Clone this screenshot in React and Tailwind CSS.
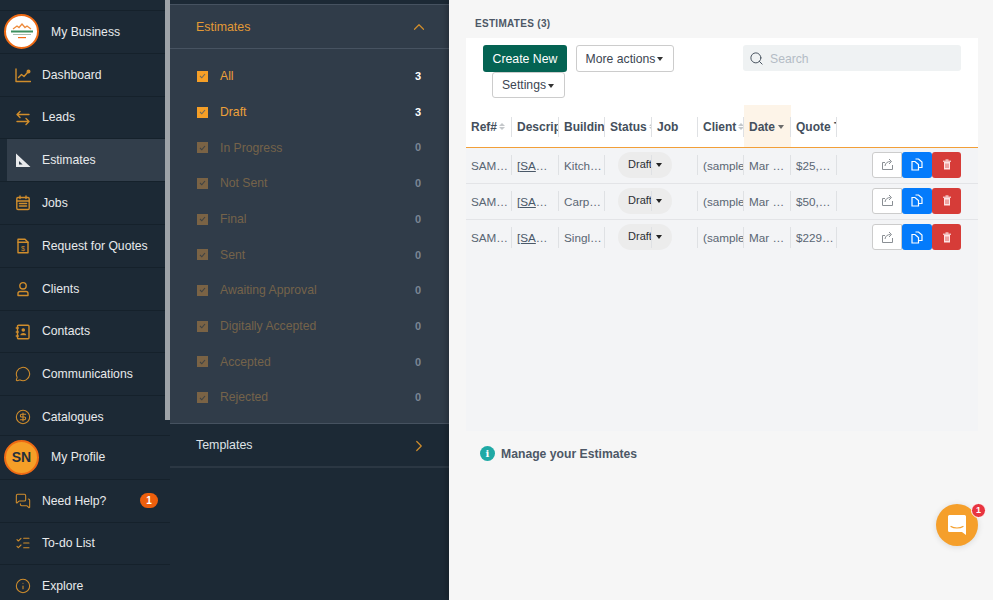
import React from "react";
import { ChevronUp, ChevronRight, Search, CircleDollarSign, MessageCircle, MessagesSquare, ListChecks, Info } from "lucide-react";

const OR = "#d08d2c";
const I = ({ children }) => (
  <svg width="16" height="16" viewBox="0 0 16 16" fill="none" stroke={OR} strokeWidth="1.4" strokeLinecap="round" strokeLinejoin="round">{children}</svg>
);
const DashIcon = () => (<I><path d="M1 2v12.5h14.5" /><path d="M3.5 10.5l3-3 2.5 2 4-4.5" /><circle cx="13.5" cy="4.5" r="1.3" fill={OR} /></I>);
const LeadsIcon = () => (<I><path d="M14 4.5H2.5M5 1.5l-3 3 3 3" /><path d="M2 11.5h11.5M11 8.5l3 3-3 3" /></I>);
const RulerIcon = () => (
  <svg width="16" height="16" viewBox="0 0 16 16"><path fillRule="evenodd" d="M1 1.5L15.5 15H1zM4 9V12.5h3.6z" fill="#e8eaec" /></svg>
);
const JobsIcon = () => (<I><rect x="1.8" y="2.5" width="12.4" height="12" rx="1.2" /><path d="M1.8 6h12.4M5 1v2.5M11 1v2.5" /><path d="M4.5 8.5h7M4.5 11h7" strokeWidth="1.6" /></I>);
const QuoteIcon = () => (<I><path d="M3 1.2h7l3 3v10.6H3z" /><path d="M3 4.2h10" /><text x="8" y="12.5" fontSize="7" fill={OR} stroke="none" textAnchor="middle" fontFamily="Liberation Sans">$</text></I>);
const ClientIcon = () => (<I><circle cx="8" cy="4.8" r="3.2" /><path d="M3 14.5v-2a2 2 0 0 1 2-2h6a2 2 0 0 1 2 2v2z" /></I>);
const ContactIcon = () => (<I><rect x="2.5" y="1.2" width="11.5" height="13.6" rx="1" /><circle cx="8.3" cy="6" r="1.8" fill={OR} stroke="none" /><path d="M5.3 11.2c.4-3 5.6-3 6 0z" fill={OR} stroke="none" /><path d="M1.3 4h2M1.3 8h2M1.3 12h2" /></I>);
const li = { size: 16, color: OR, strokeWidth: 1.6 };

const Row = ({ icon, label, active, badge }) => (
  <div className={`h-[42.8px] shrink-0 border-b border-[#15212b] flex items-center ${active ? "pl-[7px]" : ""}`}>
    <div className={`flex items-center h-full w-full ${active ? "bg-[#323e4b] pl-[8px]" : "pl-[15px]"}`}>
      <span className="w-[27px] flex shrink-0">{icon}</span>
      <span className="text-[12.2px] text-[#e8eaec]">{label}</span>
      {badge && <span className="ml-auto mr-[12px] w-[18px] h-[15px] rounded-full bg-[#ee5f0c] text-white text-[10px] font-bold flex items-center justify-center">{badge}</span>}
    </div>
  </div>
);

const Logo = () => (
  <div className="w-[35px] h-[35px] rounded-full border-[2.5px] border-[#ee6a14] bg-white flex items-center justify-center shrink-0">
    <svg width="26" height="20" viewBox="0 0 26 20" fill="none">
      <path d="M4 7l4-3 2 1.5 3-3.5 3 3.5 2-1.5 4 3" stroke="#ee8a3a" strokeWidth="1.3" />
      <rect x="2" y="8.5" width="22" height="2" fill="#3d8f5f" />
      <rect x="4" y="12" width="18" height="1" fill="#a9bcae" />
      <rect x="9" y="15" width="8" height="1.2" fill="#ee6a14" />
    </svg>
  </div>
);

const statuses = [
  ["All", 3, true], ["Draft", 3, true], ["In Progress", 0], ["Not Sent", 0], ["Final", 0], ["Sent", 0],
  ["Awaiting Approval", 0], ["Digitally Accepted", 0], ["Accepted", 0], ["Rejected", 0],
];

const Check = ({ on }) => (
  <span className={`ml-[1px] w-[11px] h-[11px] flex items-center justify-center shrink-0 ${on ? "bg-[#f59f27]" : "bg-[#7a6345]"}`}>
    <svg width="7" height="6" viewBox="0 0 7 6" fill="none"><path d="M1 3l1.8 1.8L6 1" stroke={on ? "#6f6a5c" : "#3f4344"} strokeWidth="1.1" /></svg>
  </span>
);

const cols = [
  ["Ref#", true], ["Descrip"], ["Buildin"], ["Status", true], ["Job"], ["Client", true], ["Date"], ["Quote T"],
];
const gridCls = "grid grid-cols-[46px_47px_46px_47px_46px_46px_47px_46px_1fr]";
const rows = [
  ["SAM…", "Kitch…", "$25,…"],
  ["SAM…", "Carp…", "$50,…"],
  ["SAM…", "Singl…", "$229…"],
];
const Cell = ({ children }) => (
  <div className="flex items-center h-full min-w-0 py-[7px]">
    <div className="border-r border-[#dfe1e4] h-full w-full flex items-center pl-[5px] pr-[1px] min-w-0 overflow-hidden">
      <span className="block whitespace-nowrap text-[11.7px] text-[#5a6673] pt-[2px]">{children}</span>
    </div>
  </div>
);

export default function App() {
  return (
    <div className="h-[600px] w-[993px] flex overflow-hidden font-['Liberation_Sans',sans-serif]">
      {/* Sidebar */}
      <div className="relative w-[170px] shrink-0 bg-[#1c2935] flex flex-col overflow-hidden">
        <div className="h-[10.5px] shrink-0 border-b border-[#15212b]" />
        <div className="h-[43.4px] shrink-0 border-b border-[#15212b] flex items-center pl-[4px]">
          <Logo />
          <span className="ml-[12px] text-[12.2px] text-[#e8eaec]">My Business</span>
        </div>
        <Row icon={<DashIcon />} label="Dashboard" />
        <Row icon={<LeadsIcon />} label="Leads" />
        <Row icon={<RulerIcon />} label="Estimates" active />
        <Row icon={<JobsIcon />} label="Jobs" />
        <Row icon={<QuoteIcon />} label="Request for Quotes" />
        <Row icon={<ClientIcon />} label="Clients" />
        <Row icon={<ContactIcon />} label="Contacts" />
        <Row icon={<MessageCircle {...li} />} label="Communications" />
        <div className="h-[39.5px] shrink-0 border-b border-[#15212b] overflow-hidden">
          <div className="flex items-center h-[42px] pl-[15px]">
            <span className="w-[27px] flex"><CircleDollarSign {...li} /></span>
            <span className="text-[12.2px] text-[#e8eaec]">Catalogues</span>
          </div>
        </div>
        <div className="h-[44px] shrink-0 border-b border-[#15212b] flex items-center pl-[4px]">
          <div className="w-[35px] h-[35px] rounded-full border-[2px] border-[#ee6a14] bg-[#f59f27] flex items-center justify-center text-[14px] font-bold text-[#24303c] shrink-0">SN</div>
          <span className="ml-[12px] text-[12.2px] text-[#e8eaec]">My Profile</span>
        </div>
        <Row icon={<MessagesSquare {...li} />} label="Need Help?" badge="1" />
        <Row icon={<ListChecks {...li} />} label="To-do List" />
        <Row icon={<Info {...li} />} label="Explore" />
        <div className="absolute right-0 top-0 w-[5px] h-[420px] bg-[#9ea3a8]" />
      </div>

      {/* Second panel */}
      <div className="w-[279px] shrink-0 bg-[#1c2935] flex flex-col pt-[4px]">
        <div className="bg-[#303c49] border-t border-[#465260] flex flex-col h-[419px]">
          <div className="h-[44px] shrink-0 border-b border-[#475361] flex items-center justify-between pl-[26px] pr-[21px] pt-[1px]">
            <span className="text-[12.4px] text-[#e39a35]">Estimates</span>
            <ChevronUp size={18} color={OR} strokeWidth={1.6} />
          </div>
          <div className="flex flex-col pt-[9.5px]">
            {statuses.map(([n, c, on]) => (
              <div key={n} className="h-[35.7px] flex items-center pl-[26px] pr-[28px]">
                <Check on={on} />
                <span className={`ml-[12px] text-[12.2px] ${on ? "text-[#eda03a]" : "text-[#75634a]"}`}>{n}</span>
                <span className={`ml-auto text-[11px] font-bold ${on ? "text-white" : "text-[#7a8694]"}`}>{c}</span>
              </div>
            ))}
          </div>
        </div>
        <div className="h-[45px] shrink-0 border-t border-[#465260] border-b-2 border-b-[#2b3743] flex items-center justify-between pl-[26px] pr-[21px] pt-[1px]">
          <span className="text-[12.4px] text-[#dfe3e7]">Templates</span>
          <ChevronRight size={18} color={OR} strokeWidth={1.6} />
        </div>
      </div>

      {/* Main */}
      <div className="relative flex-1 bg-[#f6f6f6] shadow-[-2px_0_6px_rgba(0,0,0,0.25)] pl-[17px] pr-[15px] min-w-0">
        <div className="h-[38px] flex items-center pl-[9px] pt-[9px] text-[10px] font-bold text-[#4d5866] tracking-[0.3px]">ESTIMATES (3)</div>
        <div className="bg-[#f3f4f6] h-[393px]">
          <div className="bg-white h-[110px] border-b border-[#f29f38] flex flex-col">
            <div className="flex pl-[17px] pr-[17px] pt-[7px] h-[67px] shrink-0">
              <div className="w-[200px] flex flex-wrap content-start">
                <button className="h-[26.5px] w-[84px] rounded-[3px] bg-[#046353] text-white text-[12.3px] mr-[9px] pt-[1px]">Create New</button>
                <button className="h-[26.5px] w-[98px] rounded-[3px] border border-[#ccc] bg-white text-[#3c4652] text-[12.2px] pt-[1px] pr-[1px]">More actions<span className="inline-block align-middle ml-[2px] border-x-[3.5px] border-x-transparent border-t-[4px] border-t-[#333]" /></button>
                <div className="w-full flex pl-[9px]">
                  <button className="h-[26px] w-[73px] rounded-[3px] border border-[#ccc] bg-white text-[#3c4652] text-[12.2px] pt-[1px] pr-[1px]">Settings<span className="inline-block align-middle ml-[2px] border-x-[3.5px] border-x-transparent border-t-[4px] border-t-[#333]" /></button>
                </div>
              </div>
              <div className="ml-auto w-[218px] h-[26px] rounded-[3px] bg-[#eff2f3] flex items-center pl-[6px] gap-[6px]">
                <Search size={15} color="#4a5561" strokeWidth={1.6} />
                <span className="text-[12.2px] text-[#b4bcc5] pt-[2px]">Search</span>
              </div>
            </div>
            <div className={`${gridCls} h-[42px]`}>
              {cols.map(([c, sort]) => (
                <div key={c} className={`flex items-center h-full min-w-0 pt-[1.5px] ${c === "Date" ? "bg-[#fdf4e8]" : ""}`}>
                  <div className="h-[20px] w-full border-r border-[#dfe1e4] flex items-center pl-[5px] overflow-hidden">
                    <span className="text-[12px] font-bold text-[#444f5c] whitespace-nowrap">{c}</span>
                    {sort && <span className="ml-[2px] flex flex-col gap-[1px] shrink-0"><span className="border-x-[3px] border-x-transparent border-b-[3px] border-b-[#c4c7ca]" /><span className="border-x-[3px] border-x-transparent border-t-[3px] border-t-[#c4c7ca]" /></span>}
                    {c === "Date" && <span className="ml-[3px] border-x-[3.5px] border-x-transparent border-t-[4px] border-t-[#6b6b6b]" />}
                  </div>
                </div>
              ))}
            </div>
          </div>
          {rows.map((r, idx) => (
            <div key={r[1]} className={`${gridCls} h-[36px] pb-[1.5px] ${idx < 2 ? "border-b-[1.5px] border-[#e3e4e7]" : ""}`}>
              <Cell>{r[0]}</Cell>
              <Cell><span className="underline text-[#4a5868]">[SA</span>…</Cell>
              <Cell>{r[1]}</Cell>
              <div className="relative flex items-center h-full">
                <div className="absolute left-[13px] top-[4px] w-[54px] h-[26px] rounded-full bg-[#ececec] flex items-center justify-center gap-[4px] text-[11px] text-[#2b2f33]">
                  <span className="-mt-[1px]">Draft</span>
                  <span className="border-x-[3.5px] border-x-transparent border-t-[4px] border-t-[#222]" />
                </div>
                <span className="absolute right-0 top-[7px] bottom-[7px] w-px bg-[#dfe1e4]" />
              </div>
              <div className="flex items-center h-full min-w-0 py-[7px]"><div className="h-full w-full border-r border-[#dfe1e4]" /></div>
              <Cell>(sample</Cell>
              <Cell>Mar …</Cell>
              <Cell>{r[2]}</Cell>
              <div className="flex items-center pl-[35px]">
                <span className="w-[30px] h-[26px] rounded-l-[3px] border border-[#ccc] bg-white flex items-center justify-center">
                  <svg width="13" height="13" viewBox="0 0 13 13" fill="none" stroke="#8a8f94" strokeWidth="1"><path d="M4 4.5H1.5v7h10V7" /><path d="M4 8c.3-3 2.5-4.5 5.5-4.5M8 1l2.5 2.5L8 6" /></svg>
                </span>
                <span className="w-[30px] h-[26px] bg-[#047bfb] rounded-[3px] flex items-center justify-center">
                  <svg width="12" height="13" viewBox="0 0 12 13" fill="none" stroke="#fff" strokeWidth="1.2"><path d="M4.5 1h3l3.5 3v5.5H7.5" /><path d="M1 3.5h3L7.5 6.5v5.5H1z" fill="#047bfb" /></svg>
                </span>
                <span className="w-[29px] h-[26px] bg-[#d63c38] rounded-[3px] flex items-center justify-center">
                  <svg width="10" height="11" viewBox="0 0 10 11" fill="none"><path d="M3.5 1h3M1 2.2h8" stroke="#fff" strokeWidth="1" /><path d="M2 3h6v7.5H2z" fill="#fde4e4" /><path d="M4 4.5v4.5M6 4.5v4.5" stroke="#d63c38" strokeWidth=".8" /></svg>
                </span>
              </div>
            </div>
          ))}
        </div>
        <div className="flex items-center pl-[14px] pt-[14px] gap-[6px]">
          <span className="w-[15px] h-[15px] rounded-full bg-[#1fa9a5] text-white flex items-center justify-center text-[10px] font-bold font-['DejaVu_Serif',serif] -mt-[2px]">i</span>
          <span className="text-[12.2px] font-bold text-[#4d5866]">Manage your Estimates</span>
        </div>

        {/* Chat bubble */}
        <div className="absolute left-[487px] top-[504px] w-[42px] h-[42px] rounded-full bg-[#f59f2b] flex items-center justify-center shadow-[0_1px_6px_rgba(0,0,0,0.12)]">
          <svg width="20" height="22" viewBox="0 0 20 22"><path d="M2.5 1h15A1.5 1.5 0 0 1 19 2.5V21l-4-3H2.5A1.5 1.5 0 0 1 1 16.5v-14A1.5 1.5 0 0 1 2.5 1z" fill="#fff" /><path d="M4 12.5c3 2 9 2 12 0" stroke="#f59f2b" strokeWidth="1.2" fill="none" strokeLinecap="round" /></svg>
          <span className="absolute -top-[1px] -right-[8px] w-[15px] h-[15px] rounded-full bg-[#e8343f] border border-white text-white text-[9px] font-bold flex items-center justify-center">1</span>
        </div>
      </div>
    </div>
  );
}
